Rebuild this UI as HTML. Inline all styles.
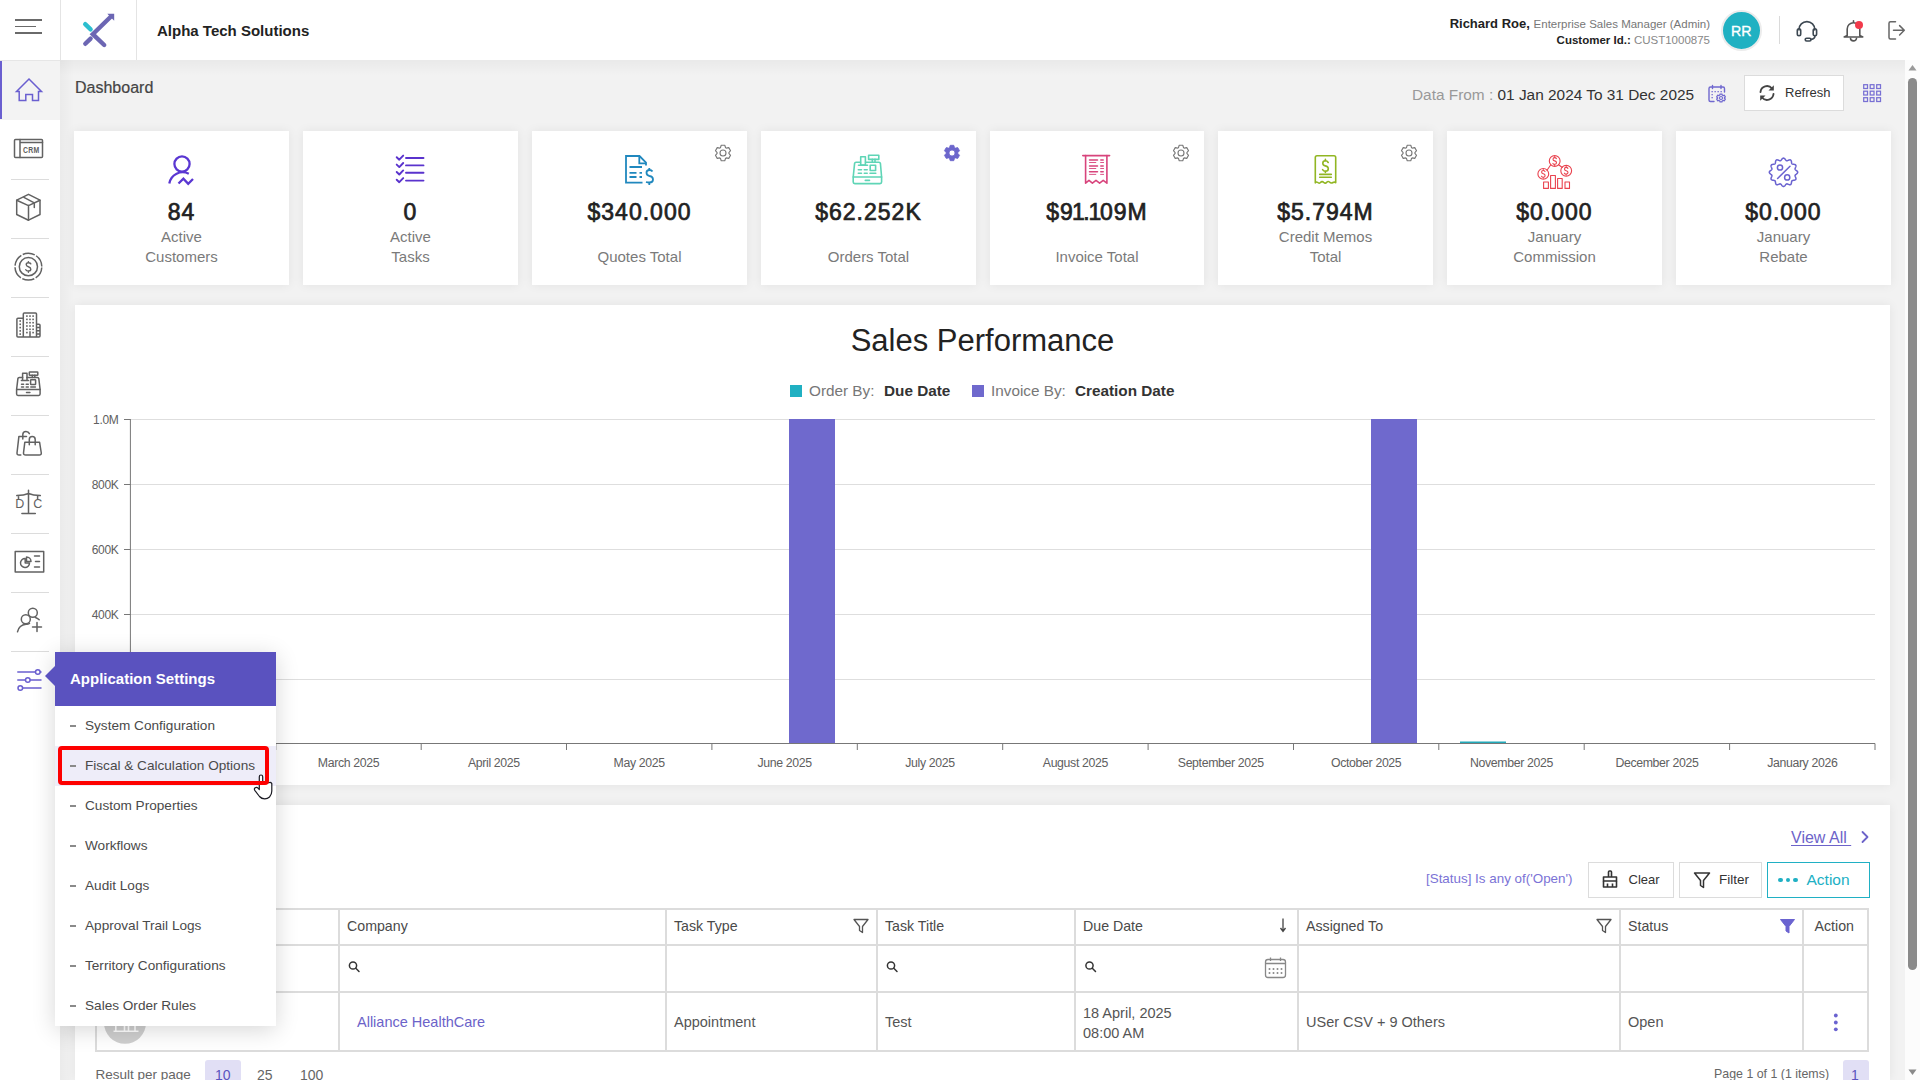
<!DOCTYPE html>
<html><head><meta charset="utf-8">
<style>
*{box-sizing:border-box;margin:0;padding:0}
html,body{width:1920px;height:1080px;overflow:hidden;background:#f2f2f2;font-family:"Liberation Sans",sans-serif;color:#333}
.abs{position:absolute}
svg{position:absolute;overflow:visible}
#header{position:absolute;left:0;top:0;width:1920px;height:60px;background:#fff;z-index:5}
#sidebar{position:absolute;left:0;top:60px;width:60px;height:1020px;background:#fff;z-index:4;border-top:1px solid #e6e6e6}
#main{position:absolute;left:60px;top:60px;width:1845px;height:1020px;background:#f2f2f2}
.card{position:absolute;top:131px;width:215px;height:154px;background:#fff;text-align:center;box-shadow:0 0 10px rgba(0,0,0,0.065)}
.card .val{position:absolute;left:0;right:0;top:200px}
.t{position:absolute;white-space:nowrap;line-height:1}
.panel{position:absolute;background:#fff;box-shadow:0 0 10px rgba(0,0,0,0.065)}
.sep{position:absolute;left:11px;width:38px;height:1px;background:#dcdcdc}
.ic{stroke:#626262;fill:none;stroke-width:1.5;stroke-linecap:round;stroke-linejoin:round}
</style></head>
<body>
<div id="main">
  <div class="abs" style="left:0;top:0;width:1845px;height:16px;background:linear-gradient(rgba(0,0,0,0.035),rgba(0,0,0,0))"></div>
  <div class="abs" style="left:0;top:0;width:14px;height:1020px;background:linear-gradient(90deg,rgba(0,0,0,0.03),rgba(0,0,0,0))"></div>
</div>
<div id="header">
  <div class="abs" style="left:15.3px;top:18.8px;width:26.4px;height:1.9px;background:#6a6a6a"></div>
  <div class="abs" style="left:15.3px;top:25.5px;width:20.7px;height:1.9px;background:#6a6a6a"></div>
  <div class="abs" style="left:15.3px;top:32.4px;width:26.4px;height:1.9px;background:#6a6a6a"></div>
  <div class="abs" style="left:60px;top:0;width:1px;height:60px;background:#e4e4e4"></div>
  <div class="abs" style="left:136px;top:0;width:1px;height:60px;background:#e4e4e4"></div>
  <svg style="left:60px;top:0" width="80" height="60" viewBox="60 0 80 60">
    <path d="M111 16.5 L92.8 34.2 L104.2 45" fill="none" stroke="#6c66b3" stroke-width="4.4" stroke-linecap="round" stroke-linejoin="miter"/>
    <polygon points="107.3,13.8 114.2,13.8 114.2,20.8" fill="#6c66b3"/>
    <line x1="85.2" y1="24.2" x2="90.6" y2="29.4" stroke="#2cbfcf" stroke-width="4.4" stroke-linecap="round"/>
    <line x1="85.3" y1="43.8" x2="90.6" y2="38.6" stroke="#6c66b3" stroke-width="4.4" stroke-linecap="round"/>
  </svg>
  <div class="t" style="left:157px;top:23px;font-size:15px;font-weight:bold;color:#222">Alpha Tech Solutions</div>
  <!-- user -->
  <div class="t" style="right:210px;top:17px;font-size:13.5px;color:#222"><b style="font-size:13px">Richard Roe,</b> <span style="font-size:11.5px;color:#777">Enterprise Sales Manager (Admin)</span></div>
  <div class="t" style="right:210px;top:35px;font-size:11.5px;color:#888"><b style="color:#222">Customer Id.:</b> CUST1000875</div>
  <div class="abs" style="left:1720.5px;top:9.5px;width:41.5px;height:41.5px;border-radius:50%;background:#20b1c2;border:2.5px solid #ececec"></div>
  <div class="t" style="left:1720.5px;width:41.5px;text-align:center;top:24px;font-size:14.2px;color:#fff;-webkit-text-stroke:0.35px #fff">RR</div>
  <div class="abs" style="left:1779px;top:16px;width:1px;height:28px;background:#dadada"></div>
  <svg style="left:0;top:0" width="1920" height="60" viewBox="0 0 1920 60">
    <g fill="none" stroke="#3d4852" stroke-width="1.6" stroke-linecap="round" stroke-linejoin="round">
      <path d="M1799 30 V29.5 A7.9 7.9 0 0 1 1814.8 29.5 V30"/>
      <rect x="1797.3" y="28.8" width="3.4" height="7" rx="1.7"/>
      <rect x="1813.2" y="28.8" width="3.4" height="7" rx="1.7"/>
      <path d="M1815 35.8 Q1815 38.8 1811 39.5"/>
      <rect x="1805.2" y="38.2" width="5.8" height="2.8" rx="1.4"/>
    </g>
    <g fill="none" stroke="#555" stroke-width="1.6" stroke-linejoin="round" stroke-linecap="round">
      <path d="M1853.5 20.8 V22.3 M1847.2 35.5 V29 A6.3 6.3 0 0 1 1859.8 29 V35.5 L1862.8 37 H1844.2 Z"/>
      <path d="M1850.5 38.3 A3 2.6 0 0 0 1856.5 38.3"/>
    </g>
    <circle cx="1859" cy="25" r="4" fill="#f23a4b"/>
    <g fill="none" stroke="#666" stroke-width="1.5" stroke-linecap="round" stroke-linejoin="round">
      <path d="M1895.5 21.8 H1890.5 Q1889 21.8 1889 23.3 V37.5 Q1889 39 1890.5 39 H1895.5"/>
      <path d="M1893.5 30.3 H1904.3 M1899.6 25.6 L1904.3 30.3 L1899.6 35"/>
    </g>
  </svg>
</div>
<div id="sidebar">
  <div class="abs" style="left:0;top:0;width:60px;height:59px;background:#f3f3f3"></div>
  <div class="abs" style="left:0;top:0;width:2px;height:58px;background:#6a5fd0"></div>
  <div class="sep" style="top:118px"></div>
  <div class="sep" style="top:177px"></div>
  <div class="sep" style="top:236px"></div>
  <div class="sep" style="top:295px"></div>
  <div class="sep" style="top:354px"></div>
  <div class="sep" style="top:413px"></div>
  <div class="sep" style="top:472px"></div>
  <div class="sep" style="top:531px"></div>
  <div class="sep" style="top:590px"></div>
</div>
<svg style="left:0;top:0;z-index:6" width="60" height="720" viewBox="0 0 60 720">
  <!-- home -->
  <path d="M16.5 91.5 L29 79 L41.5 91.5 H38.5 V100.5 H32.5 V94.5 H25.8 V100.5 H19.2 V91.5 Z" fill="none" stroke="#6a5fd0" stroke-width="1.5" stroke-linejoin="miter"/>
  <!-- CRM -->
  <g class="ic">
    <rect x="14.5" y="139.5" width="28" height="18" rx="1"/>
    <path d="M20 139.5 V157.5 M20 142.5 H42.5"/>
  </g>
  <text x="0" y="0" transform="translate(31.2 153.4) scale(0.82 1)" font-family="Liberation Sans" font-weight="bold" font-size="8.4" fill="#5e5e5e" text-anchor="middle" letter-spacing="0.3">CRM</text>
  <!-- box -->
  <g class="ic">
    <path d="M28.5 194.3 L40 200.2 V214.5 L28.5 220.2 L16.7 214.5 V200.2 Z"/>
    <path d="M16.7 200.2 L28.5 205.6 L40 200.2 M28.5 205.6 V220.2"/>
    <path d="M23.9 197.3 L34.3 202.8 V207.6"/>
  </g>
  <!-- coin -->
  <g class="ic">
    <circle cx="28.4" cy="266.7" r="13.4" stroke-dasharray="12.43 1.6" stroke-dashoffset="13.23" stroke-linecap="butt"/>
    <circle cx="28.4" cy="266.7" r="9.1"/>
    <path d="M30.8 263.8 Q30.2 262.7 28.4 262.7 Q26.2 262.7 26.2 264.6 Q26.2 266.2 28.4 266.8 Q30.8 267.4 30.8 269.2 Q30.8 271 28.4 271 Q26.4 271 25.8 269.7 M28.4 261.6 V262.7 M28.4 271 V272.2" stroke-width="1.4"/>
  </g>
  <!-- building -->
  <g class="ic" stroke-linejoin="round">
    <path d="M23.3 336.9 V314 Q23.3 313 24.3 313 H35.5 Q36.5 313 36.5 314 V336.9 M23.3 318.2 H17.9 Q16.9 318.2 16.9 319.2 V336 Q16.9 336.9 17.9 336.9 H39 Q40 336.9 40 336 V325.3 Q40 324.3 39 324.3 H36.5 M36.5 327.6 H40 M36.5 330.8 H40 M36.5 334 H40 M30 331.8 V336.9"/>
  </g>
  <g fill="#626262"><rect x="26.1" y="315.3" width="1.6" height="1.6"/><rect x="29.2" y="315.3" width="1.6" height="1.6"/><rect x="32.3" y="315.3" width="1.6" height="1.6"/><rect x="26.1" y="318.6" width="1.6" height="1.6"/><rect x="29.2" y="318.6" width="1.6" height="1.6"/><rect x="32.3" y="318.6" width="1.6" height="1.6"/><rect x="26.1" y="321.9" width="1.6" height="1.6"/><rect x="29.2" y="321.9" width="1.6" height="1.6"/><rect x="32.3" y="321.9" width="1.6" height="1.6"/><rect x="26.1" y="325.2" width="1.6" height="1.6"/><rect x="29.2" y="325.2" width="1.6" height="1.6"/><rect x="32.3" y="325.2" width="1.6" height="1.6"/><rect x="26.1" y="328.5" width="1.6" height="1.6"/><rect x="29.2" y="328.5" width="1.6" height="1.6"/><rect x="32.3" y="328.5" width="1.6" height="1.6"/><rect x="26.1" y="331.8" width="1.6" height="1.6"/><rect x="32.3" y="331.8" width="1.6" height="1.6"/><rect x="19.4" y="320.2" width="1.6" height="1.6"/><rect x="19.4" y="323.5" width="1.6" height="1.6"/><rect x="19.4" y="326.8" width="1.6" height="1.6"/><rect x="19.4" y="330.1" width="1.6" height="1.6"/><rect x="19.4" y="333.3" width="1.6" height="1.6"/></g>
  <!-- register -->
  <g class="ic">
    <path d="M22.6 377.4 H19.3 Q18 377.4 17.9 378.7 L16.6 389.4 H40.1 L38.8 378.7 Q38.7 377.4 37.4 377.4 H27"/>
    <path d="M16.6 389.4 V394 Q16.6 395.4 18 395.4 H38.7 Q40.1 395.4 40.1 394 V389.4"/>
    <path d="M22.6 380.4 V373.3 H27 V380.4 M21.4 380.4 H28.5"/>
    <rect x="29.3" y="371.9" width="8.5" height="3.3" rx="0.5"/>
    <path d="M32.3 375.2 V377.4 M34.8 375.2 V377.4"/>
    <rect x="30.6" y="379.8" width="5" height="4.6" rx="0.5"/>
    <path d="M21.5 384.3 H23.6 M26.2 384.3 H28.3 M21.5 387 H23.6 M26.2 387 H28.3 M30.8 387 H35.4 M26.5 392.6 H29.9"/>
  </g>
  <!-- bags -->
  <g class="ic">
    <path d="M26.5 436.4 H18.9 L17 453 Q16.9 455.1 19 455.1 H20.8"/>
    <path d="M22.8 439 V434.6 Q22.8 431.4 26 431.4 Q28.5 431.4 29.4 433.6"/>
    <path d="M24.8 442.3 H39.6 L41.3 453 Q41.4 455.1 39.3 455.1 H25.7 Q23.4 455.1 23.5 453 Z"/>
    <path d="M29.3 444.7 V439.5 Q29.3 436.6 32.25 436.6 Q35.2 436.6 35.2 439.5 V444.7"/>
  </g>
  <!-- scale D|C -->
  <g class="ic">
    <path d="M28.5 490.2 V513.4 M21.9 513.4 H35.3 M16.8 495.6 Q24 495.3 28.5 493.5 Q33 495.3 40.3 495.6 M18.5 495.8 V499 M37.6 495.8 V499"/>
  </g>
  <text x="19.8" y="507.5" font-family="Liberation Sans" font-size="12.5" fill="#626262" text-anchor="middle">D</text>
  <text x="37.8" y="507.5" font-family="Liberation Sans" font-size="12.5" fill="#626262" text-anchor="middle">C</text>
  <!-- dashboard card -->
  <g class="ic">
    <rect x="15.2" y="551.5" width="28.5" height="20.5"/>
    <path d="M25.2 558.5 A4.5 4.5 0 1 0 29.5 563 H25.2 Z"/>
    <path d="M26.5 557 A4.5 4.5 0 0 1 31 561.5 H26.5 Z"/>
    <path d="M34.5 556 H39.5 M35.5 561.5 H39.5 M34.5 567 H39.5"/>
  </g>
  <!-- user plus -->
  <g class="ic">
    <circle cx="32.8" cy="612.8" r="4.5"/>
    <path d="M35.5 617.5 Q38 618.5 39.2 619.8"/>
    <circle cx="25.8" cy="619.3" r="4.5"/>
    <path d="M17.5 631.8 Q19 625 26 624.3 Q28 624.5 29.5 623.5"/>
    <path d="M37 622.5 V631.5 M32.5 627 H41.5"/>
  </g>
  <!-- sliders -->
  <g stroke="#6a5fd0" stroke-width="1.5" fill="none" stroke-linecap="round">
    <path d="M17.8 672 H35.5 M40.2 672 H41 M17.8 680 H25.5 M30.2 680 H41 M22.6 688 H41"/>
    <circle cx="37.8" cy="672" r="2.3" fill="#fff"/>
    <circle cx="27.8" cy="680" r="2.3" fill="#fff"/>
    <circle cx="20.3" cy="688" r="2.3" fill="#fff"/>
  </g>
</svg>
<!-- top row -->
<div class="t" style="left:75px;top:80px;font-size:16px;color:#444;-webkit-text-stroke:0.2px #444">Dashboard</div>
<div class="t" style="left:1412px;top:87px;font-size:15.4px;color:#999">Data From : <span style="color:#333">01 Jan 2024 To 31 Dec 2025</span></div>
<svg style="left:1706px;top:84px" width="22" height="20" viewBox="0 0 22 20">
  <g fill="none" stroke="#7068cf" stroke-width="1.4" stroke-linecap="round">
    <path d="M8 17.5 H4.5 Q3 17.5 3 16 V4.5 Q3 3 4.5 3 H17 Q18.5 3 18.5 4.5 V8"/>
    <path d="M6.5 1.5 V4.5 M15 1.5 V4.5"/>
  </g>
  <g fill="#7068cf"><rect x="5.5" y="7" width="1.3" height="1.3"/><rect x="8.5" y="7" width="1.3" height="1.3"/><rect x="11.5" y="7" width="1.3" height="1.3"/><rect x="14.5" y="7" width="1.3" height="1.3"/><rect x="5.5" y="10" width="1.3" height="1.3"/><rect x="5.5" y="13" width="1.3" height="1.3"/></g>
  <g transform="translate(15,14)"><path d="M-1.2 -4.6 L1.2 -4.6 L1.6 -3.2 L2.9 -2.5 L4.3 -3 L5.5 -0.9 L4.4 0.1 L4.4 0.9 L5.5 2 L4.3 4 L2.9 3.5 L1.6 4.2 L1.2 5.6 L-1.2 5.6 L-1.6 4.2 L-2.9 3.5 L-4.3 4 L-5.5 2 L-4.4 0.9 L-4.4 0.1 L-5.5 -0.9 L-4.3 -3 L-2.9 -2.5 L-1.6 -3.2 Z" transform="scale(0.78) translate(0,-0.5)" fill="none" stroke="#7068cf" stroke-width="1.6"/><circle cx="0" cy="0" r="1.5" fill="none" stroke="#7068cf" stroke-width="1.2"/></g>
</svg>
<div class="abs" style="left:1744px;top:75px;width:100px;height:36px;background:#fff;border:1px solid #dcdcdc"></div>
<svg style="left:1758px;top:84px" width="18" height="18" viewBox="0 0 18 18">
  <g fill="none" stroke="#444" stroke-width="1.9" stroke-linecap="round">
    <path d="M2.5 8 A6.5 6.5 0 0 1 14 4.5"/>
    <path d="M15.5 10 A6.5 6.5 0 0 1 4 13.5"/>
  </g>
  <path d="M15.8 1.2 V6.5 H10.5 Z" fill="#444"/>
  <path d="M2.2 16.8 V11.5 H7.5 Z" fill="#444"/>
</svg>
<div class="t" style="left:1785px;top:86px;font-size:13px;color:#333">Refresh</div>
<svg style="left:1862px;top:83px" width="21" height="21" viewBox="0 0 21 21">
  <g fill="none" stroke="#7870d4" stroke-width="1.25">
    <rect x="1.7" y="1.7" width="3.8" height="3.8"/><rect x="8.2" y="1.7" width="3.8" height="3.8"/><rect x="14.7" y="1.7" width="3.8" height="3.8"/>
    <rect x="1.7" y="8.2" width="3.8" height="3.8"/><rect x="8.2" y="8.2" width="3.8" height="3.8"/><rect x="14.7" y="8.2" width="3.8" height="3.8"/>
    <rect x="1.7" y="14.7" width="3.8" height="3.8"/><rect x="8.2" y="14.7" width="3.8" height="3.8"/><rect x="14.7" y="14.7" width="3.8" height="3.8"/>
  </g>
</svg>

<!-- cards -->
<style>
.cv{position:absolute;left:0;width:100%;top:69.5px;font-size:23px;font-weight:normal;-webkit-text-stroke:0.7px #222;color:#222;letter-spacing:1px;line-height:1;white-space:nowrap;text-align:center}
.cl{position:absolute;left:0;width:100%;font-size:15px;color:#7a7a7a;line-height:20px;text-align:center;white-space:nowrap}
.n1{margin:0 -2.5px 0 -2px}
.gear{position:absolute;left:182px;top:13px}
</style>
<div class="card" style="left:74px">
  <svg style="left:0;top:0" width="215" height="60" viewBox="74 131 215 60">
    <g fill="none" stroke="#5a37d2" stroke-width="2.3" stroke-linecap="butt" stroke-linejoin="miter">
      <circle cx="182" cy="164" r="7.6"/>
      <path d="M169.3 183.5 A13.5 13.5 0 0 1 188.8 173.8"/>
      <path d="M178.5 183.5 L183.4 178.6 L188.2 183.8 L193 179"/>
    </g>
  </svg>
  <div class="cv">84</div>
  <div class="cl" style="top:95.8px">Active<br>Customers</div>
</div>
<div class="card" style="left:303px">
  <svg style="left:0;top:0" width="215" height="60" viewBox="303 131 215 60">
    <g fill="none" stroke="#5a33cd" stroke-width="1.9" stroke-linecap="round" stroke-linejoin="round">
      <path d="M396.7 157.2 L399.3 159.7 L403.2 155.6 M406 158 H423.5"/>
      <path d="M396.7 164.6 L399.3 167.1 L403.2 163 M406 165.4 H423.5"/>
      <path d="M396.7 172 L399.3 174.5 L403.2 170.4 M406 172.8 H423.5"/>
      <path d="M396.7 179.7 L399.3 182.2 L403.2 178.1 M406 180.6 H423.5"/>
    </g>
  </svg>
  <div class="cv">0</div>
  <div class="cl" style="top:95.8px">Active<br>Tasks</div>
</div>
<div class="card" style="left:532px">
  <svg style="left:0;top:0" width="215" height="60" viewBox="532 131 215 60">
    <g fill="none" stroke="#2088be" stroke-width="1.8" stroke-linecap="butt" stroke-linejoin="miter">
      <path d="M642.5 182.7 H626 V156 H639.5 L646 162.6 V165.5"/>
      <path d="M639.3 156 V163.3 H646"/>
      <path d="M629.5 167 H642 M629.5 172.8 H636.5 M639.5 172.8 H642 M629.5 177 H636.5 M639.5 177 H642"/>
      <path d="M652.5 171.5 Q651.5 170 649.5 170 Q646.5 170 646.5 172.8 Q646.5 175.5 649.5 176 Q653 176.5 653 179.5 Q653 182.5 649.5 182.5 Q647.5 182.5 646 182"/>
      <path d="M649.3 168 V170 M649.3 182.5 V185"/>
    </g>
  </svg>
  <svg class="gear" width="18" height="18" viewBox="-9 -9 18 18"><path d="M-2.59 -5.30 L-1.78 -7.70 L1.78 -7.70 L2.59 -5.30 L3.30 -4.89 L5.78 -5.39 L7.55 -2.31 L5.89 -0.41 L5.89 0.41 L7.55 2.31 L5.78 5.39 L3.30 4.89 L2.59 5.30 L1.78 7.70 L-1.78 7.70 L-2.59 5.30 L-3.30 4.89 L-5.78 5.39 L-7.55 2.31 L-5.89 0.41 L-5.89 -0.41 L-7.55 -2.31 L-5.78 -5.39 L-3.30 -4.89 Z" fill="none" stroke="#777" stroke-width="1.1" stroke-linejoin="round"/><circle r="3" fill="none" stroke="#777" stroke-width="1.1"/></svg>
  <div class="cv">$340.000</div>
  <div class="cl" style="top:115.8px">Quotes Total</div>
</div>
<div class="card" style="left:761px">
  <svg style="left:0;top:0" width="215" height="60" viewBox="761 131 215 60">
    <g fill="none" stroke="#5fd5b6" stroke-width="1.6" stroke-linecap="round" stroke-linejoin="round">
      <path d="M853.2 177 L854.6 163.3 Q854.8 162.2 856 162.2 H860.5 M865.6 162.2 H879 Q880.2 162.2 880.4 163.3 L881.6 177 H853.2"/>
      <path d="M853.2 177 V182 Q853.2 183.6 854.8 183.6 H880 Q881.6 183.6 881.6 182 V177"/>
      <rect x="860.7" y="156.8" width="4.7" height="8.3"/>
      <path d="M858.5 165.2 H867.5"/>
      <rect x="868.6" y="155.3" width="10.2" height="4.1"/>
      <path d="M872.3 159.4 V162 M875 159.4 V162"/>
      <rect x="870.2" y="165.3" width="5.4" height="5.2"/>
      <path d="M858.3 169.8 H861.5 M864.3 169.8 H867.2 M858.3 173.2 H861.5 M864.3 173.2 H867.2 M870 173.2 H875.8 M865.3 180.4 H869.5"/>
    </g>
  </svg>
  <svg class="gear" width="18" height="18" viewBox="-9 -9 18 18"><path d="M-2.59 -5.30 L-1.78 -7.70 L1.78 -7.70 L2.59 -5.30 L3.30 -4.89 L5.78 -5.39 L7.55 -2.31 L5.89 -0.41 L5.89 0.41 L7.55 2.31 L5.78 5.39 L3.30 4.89 L2.59 5.30 L1.78 7.70 L-1.78 7.70 L-2.59 5.30 L-3.30 4.89 L-5.78 5.39 L-7.55 2.31 L-5.89 0.41 L-5.89 -0.41 L-7.55 -2.31 L-5.78 -5.39 L-3.30 -4.89 Z M0 -3 A3 3 0 1 0 0 3 A3 3 0 1 0 0 -3 Z" fill="#6c66cc" fill-rule="evenodd" stroke="#6c66cc" stroke-width="0.8" stroke-linejoin="round"/></svg>
  <div class="cv">$62.252K</div>
  <div class="cl" style="top:115.8px">Orders Total</div>
</div>
<div class="card" style="left:990px;width:214px">
  <svg style="left:0;top:0" width="215" height="60" viewBox="990 131 215 60">
    <g fill="none" stroke="#d8447c" stroke-linecap="round" stroke-linejoin="round">
      <path d="M1082.8 155.6 H1109.6" stroke-width="1.6"/>
      <path d="M1085.6 155.6 V183.2 L1089 180.4 L1092.4 183.2 L1096 180.4 L1099.6 183.2 L1103.2 180.4 L1106.9 183.2 V155.6" stroke-width="1.6"/>
      <path d="M1089.5 159.9 H1097.5 M1100.8 159.9 H1103.2 M1089.5 165.9 H1097.5 M1100.8 165.9 H1103.2 M1089.5 171.8 H1097.5 M1100.8 171.8 H1103.2" stroke-width="1.5"/>
      <path d="M1089.5 162.5 H1095.8 M1100.6 162.5 H1103.6 M1089.5 168.5 H1095.8 M1100.6 168.5 H1103.6 M1089.5 174.4 H1095.8 M1100.6 174.4 H1103.6" stroke-width="0.9"/>
    </g>
  </svg>
  <svg class="gear" width="18" height="18" viewBox="-9 -9 18 18" ><path d="M-2.59 -5.30 L-1.78 -7.70 L1.78 -7.70 L2.59 -5.30 L3.30 -4.89 L5.78 -5.39 L7.55 -2.31 L5.89 -0.41 L5.89 0.41 L7.55 2.31 L5.78 5.39 L3.30 4.89 L2.59 5.30 L1.78 7.70 L-1.78 7.70 L-2.59 5.30 L-3.30 4.89 L-5.78 5.39 L-7.55 2.31 L-5.89 0.41 L-5.89 -0.41 L-7.55 -2.31 L-5.78 -5.39 L-3.30 -4.89 Z" fill="none" stroke="#777" stroke-width="1.1" stroke-linejoin="round"/><circle r="3" fill="none" stroke="#777" stroke-width="1.1"/></svg>
  <div class="cv">$9<span class="n1">1</span>.<span class="n1">1</span>09M</div>
  <div class="cl" style="top:115.8px">Invoice Total</div>
</div>
<div class="card" style="left:1218px">
  <svg style="left:0;top:0" width="215" height="60" viewBox="1218 131 215 60">
    <g fill="none" stroke="#91b623" stroke-width="1.6" stroke-linecap="round" stroke-linejoin="round">
      <path d="M1315.3 182.8 V157.5 Q1315.3 155.8 1317 155.8 H1334 Q1335.7 155.8 1335.7 157.5 V182.8 Q1334.5 181.5 1333 182.5 Q1331 183.8 1329.5 182 Q1328 180.8 1326.5 182.5 Q1325.5 183.8 1323.7 182.3 Q1322 180.8 1320.5 182.5 Q1319 183.8 1317.5 182.3 Q1316.3 181.5 1315.3 182.8"/>
      <path d="M1328.2 162.5 Q1327.2 160.8 1325.4 160.8 Q1322.8 160.8 1322.8 163.2 Q1322.8 165.3 1325.4 165.9 Q1328.3 166.6 1328.3 168.8 Q1328.3 171.2 1325.4 171.2 Q1323.5 171.2 1322.6 169.6"/>
      <path d="M1325.4 159.2 V160.8 M1325.4 171.2 V172.5"/>
      <path d="M1319.7 174.4 H1331.3 M1319.7 177.2 H1331.3"/>
    </g>
  </svg>
  <svg class="gear" width="18" height="18" viewBox="-9 -9 18 18" ><path d="M-2.59 -5.30 L-1.78 -7.70 L1.78 -7.70 L2.59 -5.30 L3.30 -4.89 L5.78 -5.39 L7.55 -2.31 L5.89 -0.41 L5.89 0.41 L7.55 2.31 L5.78 5.39 L3.30 4.89 L2.59 5.30 L1.78 7.70 L-1.78 7.70 L-2.59 5.30 L-3.30 4.89 L-5.78 5.39 L-7.55 2.31 L-5.89 0.41 L-5.89 -0.41 L-7.55 -2.31 L-5.78 -5.39 L-3.30 -4.89 Z" fill="none" stroke="#777" stroke-width="1.1" stroke-linejoin="round"/><circle r="3" fill="none" stroke="#777" stroke-width="1.1"/></svg>
  <div class="cv">$5.794M</div>
  <div class="cl" style="top:95.8px">Credit Memos<br>Total</div>
</div>
<div class="card" style="left:1447px">
  <svg style="left:0;top:0" width="215" height="60" viewBox="1447 131 215 60">
    <g fill="none" stroke="#e9434f" stroke-width="1.1" stroke-linecap="round" stroke-linejoin="round">
      <circle cx="1554.7" cy="161" r="5.4"/>
      <circle cx="1543.3" cy="173.9" r="5.4"/>
      <circle cx="1566.2" cy="170.8" r="5.4"/>
      <path d="M1547 170.3 L1550.8 164.8 M1558.6 164.7 L1562.3 167.5"/>
      <rect x="1543.6" y="182" width="4.8" height="6.4"/>
      <rect x="1550.6" y="175.5" width="4.8" height="12.9"/>
      <rect x="1557.6" y="178.5" width="4.6" height="9.9"/>
      <rect x="1565" y="182" width="4.5" height="6.4"/>
      <path d="M1556.4 158.6 Q1555.8 157.6 1554.7 157.6 Q1553 157.6 1553 159.2 Q1553 160.5 1554.7 160.9 Q1556.5 161.3 1556.5 162.8 Q1556.5 164.3 1554.7 164.3 Q1553.4 164.3 1552.9 163.4 M1554.7 156.6 V157.6 M1554.7 164.3 V165.4"/>
      <path d="M1545 171.5 Q1544.4 170.5 1543.3 170.5 Q1541.6 170.5 1541.6 172.1 Q1541.6 173.4 1543.3 173.8 Q1545.1 174.2 1545.1 175.7 Q1545.1 177.2 1543.3 177.2 Q1542 177.2 1541.5 176.3 M1543.3 169.5 V170.5 M1543.3 177.2 V178.3"/>
      <path d="M1567.9 168.4 Q1567.3 167.4 1566.2 167.4 Q1564.5 167.4 1564.5 169 Q1564.5 170.3 1566.2 170.7 Q1568 171.1 1568 172.6 Q1568 174.1 1566.2 174.1 Q1564.9 174.1 1564.4 173.2 M1566.2 166.4 V167.4 M1566.2 174.1 V175.2"/>
    </g>
  </svg>
  <div class="cv">$0.000</div>
  <div class="cl" style="top:95.8px">January<br>Commission</div>
</div>
<div class="card" style="left:1676px">
  <svg style="left:0;top:0" width="215" height="60" viewBox="1676 131 215 60">
    <g fill="none" stroke="#6a63d0" stroke-width="1.5" stroke-linecap="round" stroke-linejoin="round">
      <path d="M1783.50 158.10 L1783.87 158.16 L1784.23 158.33 L1784.58 158.60 L1784.90 158.93 L1785.21 159.31 L1785.50 159.70 L1785.77 160.06 L1786.04 160.36 L1786.31 160.58 L1786.61 160.71 L1786.92 160.74 L1787.27 160.69 L1787.66 160.56 L1788.07 160.39 L1788.51 160.20 L1788.97 160.02 L1789.42 159.89 L1789.85 159.83 L1790.25 159.87 L1790.60 160.00 L1790.89 160.24 L1791.12 160.57 L1791.29 160.97 L1791.40 161.43 L1791.47 161.91 L1791.53 162.38 L1791.59 162.83 L1791.67 163.23 L1791.80 163.56 L1791.99 163.81 L1792.24 164.00 L1792.57 164.13 L1792.97 164.21 L1793.42 164.27 L1793.89 164.33 L1794.37 164.40 L1794.83 164.51 L1795.23 164.68 L1795.56 164.91 L1795.80 165.20 L1795.93 165.55 L1795.97 165.95 L1795.91 166.38 L1795.78 166.83 L1795.60 167.29 L1795.41 167.73 L1795.24 168.14 L1795.11 168.53 L1795.06 168.88 L1795.09 169.19 L1795.22 169.49 L1795.44 169.76 L1795.74 170.03 L1796.10 170.30 L1796.49 170.59 L1796.87 170.90 L1797.20 171.22 L1797.47 171.57 L1797.64 171.93 L1797.70 172.30 L1797.64 172.67 L1797.47 173.03 L1797.20 173.38 L1796.87 173.70 L1796.49 174.01 L1796.10 174.30 L1795.74 174.57 L1795.44 174.84 L1795.22 175.11 L1795.09 175.41 L1795.06 175.72 L1795.11 176.07 L1795.24 176.46 L1795.41 176.87 L1795.60 177.31 L1795.78 177.77 L1795.91 178.22 L1795.97 178.65 L1795.93 179.05 L1795.80 179.40 L1795.56 179.69 L1795.23 179.92 L1794.83 180.09 L1794.37 180.20 L1793.89 180.27 L1793.42 180.33 L1792.97 180.39 L1792.57 180.47 L1792.24 180.60 L1791.99 180.79 L1791.80 181.04 L1791.67 181.37 L1791.59 181.77 L1791.53 182.22 L1791.47 182.69 L1791.40 183.17 L1791.29 183.63 L1791.12 184.03 L1790.89 184.36 L1790.60 184.60 L1790.25 184.73 L1789.85 184.77 L1789.42 184.71 L1788.97 184.58 L1788.51 184.40 L1788.07 184.21 L1787.66 184.04 L1787.27 183.91 L1786.92 183.86 L1786.61 183.89 L1786.31 184.02 L1786.04 184.24 L1785.77 184.54 L1785.50 184.90 L1785.21 185.29 L1784.90 185.67 L1784.58 186.00 L1784.23 186.27 L1783.87 186.44 L1783.50 186.50 L1783.13 186.44 L1782.77 186.27 L1782.42 186.00 L1782.10 185.67 L1781.79 185.29 L1781.50 184.90 L1781.23 184.54 L1780.96 184.24 L1780.69 184.02 L1780.39 183.89 L1780.08 183.86 L1779.73 183.91 L1779.34 184.04 L1778.93 184.21 L1778.49 184.40 L1778.03 184.58 L1777.58 184.71 L1777.15 184.77 L1776.75 184.73 L1776.40 184.60 L1776.11 184.36 L1775.88 184.03 L1775.71 183.63 L1775.60 183.17 L1775.53 182.69 L1775.47 182.22 L1775.41 181.77 L1775.33 181.37 L1775.20 181.04 L1775.01 180.79 L1774.76 180.60 L1774.43 180.47 L1774.03 180.39 L1773.58 180.33 L1773.11 180.27 L1772.63 180.20 L1772.17 180.09 L1771.77 179.92 L1771.44 179.69 L1771.20 179.40 L1771.07 179.05 L1771.03 178.65 L1771.09 178.22 L1771.22 177.77 L1771.40 177.31 L1771.59 176.87 L1771.76 176.46 L1771.89 176.07 L1771.94 175.72 L1771.91 175.41 L1771.78 175.11 L1771.56 174.84 L1771.26 174.57 L1770.90 174.30 L1770.51 174.01 L1770.13 173.70 L1769.80 173.38 L1769.53 173.03 L1769.36 172.67 L1769.30 172.30 L1769.36 171.93 L1769.53 171.57 L1769.80 171.22 L1770.13 170.90 L1770.51 170.59 L1770.90 170.30 L1771.26 170.03 L1771.56 169.76 L1771.78 169.49 L1771.91 169.19 L1771.94 168.88 L1771.89 168.53 L1771.76 168.14 L1771.59 167.73 L1771.40 167.29 L1771.22 166.83 L1771.09 166.38 L1771.03 165.95 L1771.07 165.55 L1771.20 165.20 L1771.44 164.91 L1771.77 164.68 L1772.17 164.51 L1772.63 164.40 L1773.11 164.33 L1773.58 164.27 L1774.03 164.21 L1774.43 164.13 L1774.76 164.00 L1775.01 163.81 L1775.20 163.56 L1775.33 163.23 L1775.41 162.83 L1775.47 162.38 L1775.53 161.91 L1775.60 161.43 L1775.71 160.97 L1775.88 160.57 L1776.11 160.24 L1776.40 160.00 L1776.75 159.87 L1777.15 159.83 L1777.58 159.89 L1778.03 160.02 L1778.49 160.20 L1778.93 160.39 L1779.34 160.56 L1779.73 160.69 L1780.08 160.74 L1780.39 160.71 L1780.69 160.58 L1780.96 160.36 L1781.23 160.06 L1781.50 159.70 L1781.79 159.31 L1782.10 158.93 L1782.42 158.60 L1782.77 158.33 L1783.13 158.16 L1783.50 158.10 Z"/>
      <circle cx="1780" cy="167.5" r="2.6"/>
      <circle cx="1787.2" cy="177.4" r="2.6"/>
      <path d="M1777.6 178.5 L1790 166.3"/>
    </g>
  </svg>
  <div class="cv">$0.000</div>
  <div class="cl" style="top:95.8px">January<br>Rebate</div>
</div>
<!-- chart -->
<div class="panel" style="left:75px;top:305px;width:1815px;height:480px"></div>
<div class="t" style="left:75px;width:1815px;text-align:center;top:325px;font-size:31px;color:#222">Sales Performance</div>
<div class="abs" style="left:790px;top:385px;width:12px;height:12px;background:#20b0c2"></div>
<div class="t" style="left:809px;top:382.5px;font-size:15.3px;color:#777">Order By:</div>
<div class="t" style="left:884px;top:382.5px;font-size:15.3px;color:#333;font-weight:bold">Due Date</div>
<div class="abs" style="left:972px;top:385px;width:12px;height:12px;background:#6f69cd"></div>
<div class="t" style="left:991px;top:382.5px;font-size:15.3px;color:#777">Invoice By:</div>
<div class="t" style="left:1075px;top:382.5px;font-size:15.3px;color:#333;font-weight:bold">Creation Date</div>
<svg style="left:0;top:0" width="1920" height="1080" viewBox="0 0 1920 1080">
<line x1="130.4" y1="419.5" x2="1875.0" y2="419.5" stroke="#dedede" stroke-width="1"/>
<line x1="124" y1="419.5" x2="130.4" y2="419.5" stroke="#777" stroke-width="1"/>
<line x1="130.4" y1="484.5" x2="1875.0" y2="484.5" stroke="#dedede" stroke-width="1"/>
<line x1="124" y1="484.5" x2="130.4" y2="484.5" stroke="#777" stroke-width="1"/>
<line x1="130.4" y1="549.5" x2="1875.0" y2="549.5" stroke="#dedede" stroke-width="1"/>
<line x1="124" y1="549.5" x2="130.4" y2="549.5" stroke="#777" stroke-width="1"/>
<line x1="130.4" y1="614.5" x2="1875.0" y2="614.5" stroke="#dedede" stroke-width="1"/>
<line x1="124" y1="614.5" x2="130.4" y2="614.5" stroke="#777" stroke-width="1"/>
<line x1="130.4" y1="679.5" x2="1875.0" y2="679.5" stroke="#dedede" stroke-width="1"/>
<line x1="124" y1="679.5" x2="130.4" y2="679.5" stroke="#777" stroke-width="1"/>
<rect x="789" y="419" width="46" height="324.5" fill="#6f69cd"/>
<rect x="1371" y="419" width="46" height="324.5" fill="#6f69cd"/>
<rect x="1460.0" y="741.5" width="46" height="2" fill="#22a9b9"/>
<line x1="130.4" y1="419" x2="130.4" y2="744" stroke="#777" stroke-width="1"/>
<line x1="130.4" y1="743.5" x2="1875.0" y2="743.5" stroke="#777" stroke-width="1"/>
<line x1="130.4" y1="743.5" x2="130.4" y2="750" stroke="#777" stroke-width="1"/>
<line x1="275.8" y1="743.5" x2="275.8" y2="750" stroke="#777" stroke-width="1"/>
<line x1="421.2" y1="743.5" x2="421.2" y2="750" stroke="#777" stroke-width="1"/>
<line x1="566.5" y1="743.5" x2="566.5" y2="750" stroke="#777" stroke-width="1"/>
<line x1="711.9" y1="743.5" x2="711.9" y2="750" stroke="#777" stroke-width="1"/>
<line x1="857.3" y1="743.5" x2="857.3" y2="750" stroke="#777" stroke-width="1"/>
<line x1="1002.7" y1="743.5" x2="1002.7" y2="750" stroke="#777" stroke-width="1"/>
<line x1="1148.1" y1="743.5" x2="1148.1" y2="750" stroke="#777" stroke-width="1"/>
<line x1="1293.5" y1="743.5" x2="1293.5" y2="750" stroke="#777" stroke-width="1"/>
<line x1="1438.8" y1="743.5" x2="1438.8" y2="750" stroke="#777" stroke-width="1"/>
<line x1="1584.2" y1="743.5" x2="1584.2" y2="750" stroke="#777" stroke-width="1"/>
<line x1="1729.6" y1="743.5" x2="1729.6" y2="750" stroke="#777" stroke-width="1"/>
<line x1="1875.0" y1="743.5" x2="1875.0" y2="750" stroke="#777" stroke-width="1"/>
<text x="203.1" y="766.5" font-family="Liberation Sans" font-size="12.3" letter-spacing="-0.35" fill="#606060" text-anchor="middle">February 2025</text>
<text x="348.5" y="766.5" font-family="Liberation Sans" font-size="12.3" letter-spacing="-0.35" fill="#606060" text-anchor="middle">March 2025</text>
<text x="493.9" y="766.5" font-family="Liberation Sans" font-size="12.3" letter-spacing="-0.35" fill="#606060" text-anchor="middle">April 2025</text>
<text x="639.2" y="766.5" font-family="Liberation Sans" font-size="12.3" letter-spacing="-0.35" fill="#606060" text-anchor="middle">May 2025</text>
<text x="784.6" y="766.5" font-family="Liberation Sans" font-size="12.3" letter-spacing="-0.35" fill="#606060" text-anchor="middle">June 2025</text>
<text x="930.0" y="766.5" font-family="Liberation Sans" font-size="12.3" letter-spacing="-0.35" fill="#606060" text-anchor="middle">July 2025</text>
<text x="1075.4" y="766.5" font-family="Liberation Sans" font-size="12.3" letter-spacing="-0.35" fill="#606060" text-anchor="middle">August 2025</text>
<text x="1220.8" y="766.5" font-family="Liberation Sans" font-size="12.3" letter-spacing="-0.35" fill="#606060" text-anchor="middle">September 2025</text>
<text x="1366.2" y="766.5" font-family="Liberation Sans" font-size="12.3" letter-spacing="-0.35" fill="#606060" text-anchor="middle">October 2025</text>
<text x="1511.5" y="766.5" font-family="Liberation Sans" font-size="12.3" letter-spacing="-0.35" fill="#606060" text-anchor="middle">November 2025</text>
<text x="1656.9" y="766.5" font-family="Liberation Sans" font-size="12.3" letter-spacing="-0.35" fill="#606060" text-anchor="middle">December 2025</text>
<text x="1802.3" y="766.5" font-family="Liberation Sans" font-size="12.3" letter-spacing="-0.35" fill="#606060" text-anchor="middle">January 2026</text>
<text x="118.5" y="423.5" font-family="Liberation Sans" font-size="12" letter-spacing="-0.3" fill="#606060" text-anchor="end">1.0M</text>
<text x="118.5" y="488.5" font-family="Liberation Sans" font-size="12" letter-spacing="-0.3" fill="#606060" text-anchor="end">800K</text>
<text x="118.5" y="553.5" font-family="Liberation Sans" font-size="12" letter-spacing="-0.3" fill="#606060" text-anchor="end">600K</text>
<text x="118.5" y="618.5" font-family="Liberation Sans" font-size="12" letter-spacing="-0.3" fill="#606060" text-anchor="end">400K</text>
<text x="118.5" y="683.5" font-family="Liberation Sans" font-size="12" letter-spacing="-0.3" fill="#606060" text-anchor="end">200K</text>
</svg>
<!-- table panel -->
<div class="panel" style="left:75px;top:805px;width:1815px;height:275px"></div>
<div class="t" style="left:1791px;top:830px;font-size:16px;color:#6c63c9;text-decoration:underline;text-underline-offset:2px">View All&nbsp;</div>
<svg style="left:1858px;top:829px" width="14" height="16" viewBox="0 0 14 16"><path d="M4.5 3 L9.5 8 L4.5 13" fill="none" stroke="#6c63c9" stroke-width="1.8" stroke-linecap="round" stroke-linejoin="round"/></svg>
<div class="t" style="left:1426px;top:872px;font-size:13.4px;color:#7b73d6">[Status] Is any of('Open')</div>
<div class="abs" style="left:1588px;top:862px;width:86px;height:36px;border:1px solid #dcdcdc;background:#fff"></div>
<svg style="left:1600px;top:869px" width="20" height="20" viewBox="0 0 20 20">
  <g fill="none" stroke="#333" stroke-width="1.6" stroke-linejoin="round">
    <path d="M8.5 8 V3 Q8.5 2 9.5 2 H10.5 Q11.5 2 11.5 3 V8"/>
    <path d="M3.5 8 H16.5 V12 H3.5 Z"/>
    <path d="M3.5 12 V18 H16.5 V12 M7.5 18 V14.5 M12.5 18 V14.5"/>
  </g>
</svg>
<div class="t" style="left:1628.5px;top:873px;font-size:13px;color:#333">Clear</div>
<div class="abs" style="left:1679px;top:862px;width:83px;height:36px;border:1px solid #dcdcdc;background:#fff"></div>
<svg style="left:1692px;top:870px" width="20" height="20" viewBox="0 0 20 20">
  <path d="M2.5 3 H17.5 L11.5 10.5 V17.5 L8.5 15.5 V10.5 Z" fill="none" stroke="#333" stroke-width="1.5" stroke-linejoin="round"/>
</svg>
<div class="t" style="left:1719px;top:873px;font-size:13.5px;color:#333">Filter</div>
<div class="abs" style="left:1767px;top:862px;width:103px;height:36px;border:1.5px solid #20b0c4;background:#fff"></div>
<div class="abs" style="left:1778px;top:877.8px;width:4.6px;height:4.6px;border-radius:50%;background:#20b0c4"></div>
<div class="abs" style="left:1785.6px;top:877.8px;width:4.6px;height:4.6px;border-radius:50%;background:#20b0c4"></div>
<div class="abs" style="left:1793.2px;top:877.8px;width:4.6px;height:4.6px;border-radius:50%;background:#20b0c4"></div>
<div class="t" style="left:1806.5px;top:872px;font-size:15.5px;color:#20b0c4">Action</div>

<!-- table grid -->
<style>
.hl{position:absolute;height:2px;background:#dcdcdc;left:95px;width:1774px}
.vl{position:absolute;width:2px;background:#dcdcdc;top:908px;height:144px}
.th{position:absolute;white-space:nowrap;line-height:1;font-size:14.2px;color:#4a4a4a;top:919px}
.td{position:absolute;white-space:nowrap;line-height:1;font-size:14.5px;color:#555}
</style>
<div class="abs" style="left:95px;top:908px;width:1774px;height:144px;background:#fff"></div>
<div class="hl" style="top:908px"></div>
<div class="hl" style="top:944px"></div>
<div class="hl" style="top:991px"></div>
<div class="hl" style="top:1050px"></div>
<div class="vl" style="left:95px"></div>
<div class="vl" style="left:338px"></div>
<div class="vl" style="left:665px"></div>
<div class="vl" style="left:876px"></div>
<div class="vl" style="left:1074px"></div>
<div class="vl" style="left:1297px"></div>
<div class="vl" style="left:1619px"></div>
<div class="vl" style="left:1802px"></div>
<div class="vl" style="left:1867px"></div>
<div class="th" style="left:347px">Company</div>
<div class="th" style="left:674px">Task Type</div>
<div class="th" style="left:885px">Task Title</div>
<div class="th" style="left:1083px">Due Date</div>
<div class="th" style="left:1306px">Assigned To</div>
<div class="th" style="left:1628px">Status</div>
<div class="th" style="left:1814.5px">Action</div>
<svg style="left:0;top:0" width="1920" height="1080" viewBox="0 0 1920 1080">
  <g fill="none" stroke="#555" stroke-width="1.3" stroke-linejoin="round">
    <path d="M854 919.5 H868 L862.5 926.5 V932.5 L859.5 930.5 V926.5 Z"/>
    <path d="M1597 919.5 H1611 L1605.5 926.5 V932.5 L1602.5 930.5 V926.5 Z"/>
  </g>
  <path d="M1780.5 919.5 H1794.5 L1789 926.5 V933 L1786 931 V926.5 Z" fill="#6a63d0" stroke="#6a63d0" stroke-width="1" stroke-linejoin="round"/>
  <path d="M1283 918.5 V931 M1280.5 928 L1283 931.5 L1285.5 928" fill="none" stroke="#444" stroke-width="1.3"/>
  <g fill="none" stroke="#333" stroke-width="1.5" stroke-linecap="round">
    <circle cx="353" cy="965.5" r="3.6"/><path d="M355.8 968.3 L359 971.5"/>
    <circle cx="891" cy="965.5" r="3.6"/><path d="M893.8 968.3 L897 971.5"/>
    <circle cx="1089.5" cy="965.5" r="3.6"/><path d="M1092.3 968.3 L1095.5 971.5"/>
  </g>
  <g fill="none" stroke="#888" stroke-width="1.3">
    <rect x="1265.5" y="959.5" width="20" height="18" rx="2.5"/>
    <path d="M1265.5 963.5 H1285.5 M1270.5 957.5 V961 M1280.5 957.5 V961"/>
  </g>
  <g fill="#888">
    <circle cx="1269.5" cy="969" r="1"/><circle cx="1273.5" cy="969" r="1"/><circle cx="1277.5" cy="969" r="1"/><circle cx="1281.5" cy="969" r="1"/>
    <circle cx="1269.5" cy="973" r="1"/><circle cx="1273.5" cy="973" r="1"/><circle cx="1277.5" cy="973" r="1"/><circle cx="1281.5" cy="973" r="1"/>
  </g>
  <circle cx="125" cy="1022.8" r="21" fill="#cfcfcf"/>
  <g fill="none" stroke="#fff" stroke-width="1.6"><path d="M113.5 1031.3 H138.5 M115.8 1031.3 V1012 H124.5 V1031.3 M128.5 1031.3 V1018 H135 V1031.3"/></g>
  <g fill="#fff"><rect x="118" y="1015" width="1.5" height="1.5"/><rect x="121" y="1015" width="1.5" height="1.5"/><rect x="118" y="1019" width="1.5" height="1.5"/><rect x="121" y="1019" width="1.5" height="1.5"/><rect x="118" y="1023" width="1.5" height="1.5"/><rect x="121" y="1023" width="1.5" height="1.5"/></g>
  <g fill="#6a63d0"><circle cx="1835.8" cy="1015.5" r="1.9"/><circle cx="1835.8" cy="1022.5" r="1.9"/><circle cx="1835.8" cy="1029.3" r="1.9"/></g>
</svg>
<div class="td" style="left:357px;top:1015px;color:#6c63c9">Alliance HealthCare</div>
<div class="td" style="left:674px;top:1015px">Appointment</div>
<div class="td" style="left:885px;top:1015px">Test</div>
<div class="td" style="left:1083px;top:1005px;line-height:20px;top:1002.5px">18 April, 2025<br>08:00 AM</div>
<div class="td" style="left:1306px;top:1015px">USer CSV + 9 Others</div>
<div class="td" style="left:1628px;top:1015px">Open</div>
<!-- pagination -->
<div class="t" style="left:95.5px;top:1068px;font-size:13.5px;color:#666">Result per page</div>
<div class="abs" style="left:205px;top:1060px;width:36px;height:30px;background:#e1dff5;border-radius:3px"></div>
<div class="t" style="left:215px;top:1068px;font-size:14px;color:#5b53c0">10</div>
<div class="t" style="left:257px;top:1068px;font-size:14px;color:#666">25</div>
<div class="t" style="left:300px;top:1068px;font-size:14px;color:#666">100</div>
<div class="t" style="left:1714px;top:1068px;font-size:12.4px;color:#666">Page 1 of 1 (1 items)</div>
<div class="abs" style="left:1843px;top:1060px;width:26px;height:30px;background:#e1dff5;border-radius:3px"></div>
<div class="t" style="left:1851px;top:1068px;font-size:14px;color:#5b53c0">1</div>
<!-- scrollbar -->
<div class="abs" style="left:1905px;top:60px;width:15px;height:1020px;background:#fcfcfc"></div>
<div class="abs" style="left:1908px;top:78px;width:9px;height:892px;background:#8a8a8a;border-radius:4.5px"></div>
<svg style="left:1905px;top:60px" width="15" height="1020" viewBox="0 0 15 1020">
  <path d="M3.5 10.5 L7.5 5 L11.5 10.5 Z" fill="#999"/>
  <path d="M3.5 1009.5 L7.5 1015 L11.5 1009.5 Z" fill="#8a8a8a"/>
</svg>

<!-- popup -->
<style>
.pi{position:absolute;left:55px;width:221px;height:40px}
.pi span{position:absolute;left:30px;top:12.5px;font-size:13.6px;color:#4a4a4a;white-space:nowrap;line-height:1}
.pi i{position:absolute;left:15px;top:19px;width:5.5px;height:2.2px;background:#8a8a8a}
</style>
<div class="abs" style="left:55px;top:652px;width:221px;height:374px;background:#fff;box-shadow:0 4px 22px rgba(0,0,0,0.16);z-index:10">
</div>
<div class="abs" style="left:55px;top:652px;width:221px;height:54px;background:#5a52bf;z-index:11"></div>
<svg style="left:44px;top:664px;z-index:11" width="12" height="24" viewBox="0 0 12 24"><path d="M1 12 L11.5 1.5 V22.5 Z" fill="#5a52bf"/></svg>
<div class="t" style="left:70px;top:671px;font-size:15px;font-weight:bold;color:#fff;z-index:12">Application Settings</div>
<div style="position:absolute;left:0;top:0;z-index:12">
  <div class="pi" style="top:706px"><i></i><span>System Configuration</span></div>
  <div class="pi" style="top:746px;background:#eeedf9"><i></i><span>Fiscal &amp; Calculation Options</span></div>
  <div class="pi" style="top:786px"><i></i><span>Custom Properties</span></div>
  <div class="pi" style="top:826px"><i></i><span>Workflows</span></div>
  <div class="pi" style="top:866px"><i></i><span>Audit Logs</span></div>
  <div class="pi" style="top:906px"><i></i><span>Approval Trail Logs</span></div>
  <div class="pi" style="top:946px"><i></i><span>Territory Configurations</span></div>
  <div class="pi" style="top:986px"><i></i><span>Sales Order Rules</span></div>
  <svg style="left:0;top:0" width="300" height="820" viewBox="0 0 300 820">
    <path d="M259.3 789.5 V776.8 Q259.3 775 261 775 Q262.7 775 262.7 776.8 V783.2 Q264 781.8 265.8 782.6 Q267.3 781.6 268.8 782.8 Q270.6 781.8 271.8 783.6 V791 Q271.8 794.5 269.5 797 Q267.5 798.8 264.8 798.8 Q261.5 798.8 259.5 796.5 L254.8 790.3 Q253.8 788.8 255.2 787.8 Q256.8 786.8 258.3 788.4 Z" fill="#fff" stroke="#1a1a22" stroke-width="1.2" stroke-linejoin="round"/>
  </svg>
  <div class="abs" style="left:58px;top:746px;width:211px;height:39px;border:4px solid #fd0000;border-radius:4px"></div>
</div>

</body></html>
